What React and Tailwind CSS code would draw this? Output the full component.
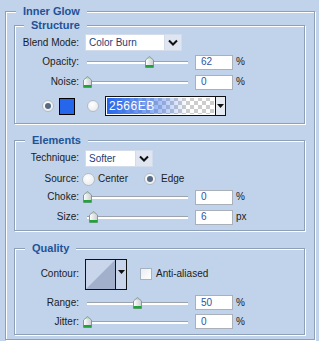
import React from "react";

const etched =
  "border border-[#8e9fb8] shadow-[inset_1px_1px_0_#ffffff,1px_1px_0_#ffffff]";

const Group = ({ title, titleLeft, className, children }) => (
  <div className={`relative ${etched} ${className}`}>
    <span
      className="absolute top-[-8px] bg-[#c1d3ea] px-[7px] text-[11px] font-bold leading-[14px] text-[#1f5296]"
      style={{ left: titleLeft }}
    >
      {title}
    </span>
    {children}
  </div>
);

const Label = ({ children }) => (
  <span className="w-[64px] shrink-0 text-right text-[#1c1c1c]">{children}</span>
);

const Thumb = () => (
  <svg width="9" height="12" viewBox="0 0 9 12">
    <defs>
      <linearGradient id="tg" x1="0" x2="1" y1="0" y2="0">
        <stop offset="0" stopColor="#ffffff" />
        <stop offset="1" stopColor="#c9cdd3" />
      </linearGradient>
    </defs>
    <path d="M0.5 4 L4.5 0.5 L8.5 4 V11.5 H0.5 Z" fill="url(#tg)" stroke="#8c949e" />
    <path d="M2.5 2.5 L4.5 1 L6.5 2.5 Z" fill="#8fd69a" />
    <rect x="0.5" y="9" width="8" height="2.5" fill="#22a33a" />
  </svg>
);

const Slider = ({ value }) => (
  <div className="relative ml-[4px] h-[14px] w-[109px] shrink-0">
    <div className="absolute left-[4px] top-[6px] h-[3px] w-[101px] border-t border-[#9aa3ae] bg-white" />
    <div className="absolute top-[1px]" style={{ left: value }}>
      <Thumb />
    </div>
  </div>
);

const NumBox = ({ value, unit }) => (
  <>
    <div className="ml-[3px] flex h-[15px] w-[38px] shrink-0 items-center border border-[#a9b0b9] bg-white pl-[5px] text-[#2a55a6]">
      {value}
    </div>
    <span className="ml-[3px] text-[#1c1c1c]">{unit}</span>
  </>
);

const Radio = ({ checked, className = "" }) => (
  <span
    className={`flex h-[12px] w-[12px] shrink-0 items-center justify-center rounded-full border border-[#b3bcc8] bg-[radial-gradient(circle_at_40%_35%,#ffffff,#e3e7ec)] ${className}`}
  >
    {checked && <span className="h-[6px] w-[6px] rounded-full bg-[#566a84]" />}
  </span>
);

const Chevron = () => (
  <svg width="10" height="7" viewBox="0 0 10 7">
    <path d="M1 1.5 L5 5.5 L9 1.5" fill="none" stroke="#111" strokeWidth="2" />
  </svg>
);

const Select = ({ value, width }) => (
  <div
    className="ml-[6px] flex h-[17px] shrink-0 border border-[#d3dcea] bg-white"
    style={{ width }}
  >
    <span className="flex-1 pl-[3px] leading-[15px] text-[#1d3f7a]">{value}</span>
    <span className="flex w-[17px] items-center justify-center border-l border-[#d3dcea] bg-[#dfe6f1]">
      <Chevron />
    </span>
  </div>
);

const Caret = () => (
  <svg width="7" height="4" viewBox="0 0 7 4">
    <path d="M0 0 H7 L3.5 4 Z" fill="#111" />
  </svg>
);

const SliderRow = ({ label, value, unit = "%", className }) => (
  <div className={`flex items-center ${className}`}>
    <Label>{label}</Label>
    <Slider value={value} />
    <NumBox value={value} unit={unit} />
  </div>
);

export default function App() {
  return (
    <div
      className="h-[341px] w-[319px] overflow-hidden bg-[#c1d3ea] pl-[5px] pt-[11px] text-[10px] leading-[12px]"
      style={{ fontFamily: '"Liberation Sans", Arial, sans-serif' }}
    >
      <Group title="Inner Glow" titleLeft="10px" className="h-[329px] w-[310px] pl-[8px] pt-[13px]">
        {/* Structure */}
        <Group title="Structure" titleLeft="9px" className="h-[99px] w-[291px] pt-[7px]">
          <div className="flex h-[19px] items-center">
            <Label>Blend Mode:</Label>
            <Select value="Color Burn" width="97px" />
          </div>
          <SliderRow label="Opacity:" value={62} className="h-[20px]" />
          <SliderRow label="Noise:" value={0} className="h-[20px]" />
          <div className="mt-[4px] flex h-[20px] items-center">
            <Radio checked className="ml-[27px]" />
            <span className="ml-[5px] h-[17px] w-[16px] border border-black bg-[#2566eb]" />
            <Radio className="ml-[12px]" />
            <div className="ml-[6px] flex h-[20px] w-[121px] border border-[#111]">
              <div className="relative flex-1 bg-[repeating-conic-gradient(#cdcdcd_0%_25%,#ffffff_0%_50%)] bg-[length:8px_8px]">
                <div className="flex h-full items-center border border-white bg-[linear-gradient(90deg,#2566eb_0%,rgba(37,102,235,0.55)_40%,rgba(37,102,235,0)_75%)] pl-[2px] text-[12px] tracking-[0.5px] text-white">
                  2566EB
                </div>
              </div>
              <span className="flex w-[10px] items-center justify-center border-l border-[#111] bg-[#e6ebf2]">
                <Caret />
              </span>
            </div>
          </div>
        </Group>

        {/* Elements */}
        <Group title="Elements" titleLeft="10px" className="mt-[16px] h-[91px] w-[291px] pt-[7px]">
          <div className="flex h-[20px] items-center">
            <Label>Technique:</Label>
            <Select value="Softer" width="68px" />
          </div>
          <div className="mt-[2px] flex h-[18px] items-center">
            <Label>Source:</Label>
            <Radio className="ml-[3px] h-[13px] w-[13px]" />
            <span className="ml-[3px] text-[#1c1c1c]">Center</span>
            <Radio checked className="ml-[16px]" />
            <span className="ml-[5px] text-[#1c1c1c]">Edge</span>
          </div>
          <SliderRow label="Choke:" value={0} className="h-[18px]" />
          <SliderRow label="Size:" value={6} unit="px" className="mt-[1px] h-[20px]" />
        </Group>

        {/* Quality */}
        <Group title="Quality" titleLeft="10px" className="mt-[17px] h-[87px] w-[291px] pt-[10px]">
          <div className="flex h-[30px] items-center">
            <Label>Contour:</Label>
            <div className="ml-[6px] flex h-[31px] w-[42px] border border-[#111] bg-white">
              <svg width="29" height="29" viewBox="0 0 29 29" className="shrink-0">
                <rect x="0" y="0" width="29" height="29" fill="#c9d5ea" />
                <path d="M0 29 L29 0 V29 Z" fill="#a2b0cb" />
              </svg>
              <span className="flex flex-1 items-start justify-center border-l border-[#111] bg-[#c9d5ea] pt-[10px]">
                <Caret />
              </span>
            </div>
            <span className="ml-[13px] h-[12px] w-[12px] border border-[#a7b2c1] bg-[linear-gradient(135deg,#e9edf2,#ffffff)]" />
            <span className="ml-[4px] text-[#1c1c1c]">Anti-aliased</span>
          </div>
          <SliderRow label="Range:" value={50} className="mt-[4px] h-[19px]" />
          <SliderRow label="Jitter:" value={0} className="h-[19px]" />
        </Group>
      </Group>
    </div>
  );
}
